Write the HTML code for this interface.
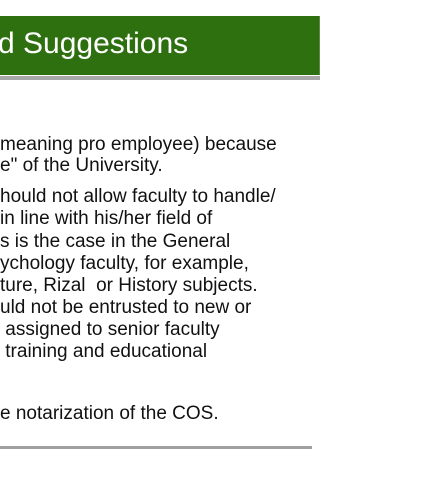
<!DOCTYPE html>
<html><head><style>
body{margin:0;width:426px;height:480px;background:#fff;overflow:hidden;position:relative;font-family:"Liberation Sans",sans-serif}
.bar{position:absolute;left:0;top:16px;width:319px;height:59px;background:#2e7010;border-right:1px solid #5a8a40}
.bar span{position:absolute;left:-2px;top:11px;color:#fff;font-size:30px;white-space:nowrap}
.sh{position:absolute;left:0;top:76px;width:320px;height:4px;background:#a8a8a8}
.t{position:absolute;left:0;white-space:nowrap;font-size:19px;color:#111;line-height:22px}
.bl{position:absolute;left:0;top:446px;width:312px;height:3px;background:#a0a0a0}
</style></head><body>
<div class="bar"><span>d Suggestions</span></div>
<div class="sh"></div>
<div class="t" style="top:134px">meaning pro employee) because</div>
<div class="t" style="top:155px">e" of the University.</div>
<div class="t" style="top:186px">hould not allow faculty to handle/</div>
<div class="t" style="top:208px">in line with his/her field of</div>
<div class="t" style="top:231px">s is the case in the General</div>
<div class="t" style="top:253px">ychology faculty, for example,</div>
<div class="t" style="top:275px">ture, Rizal&nbsp; or History subjects.</div>
<div class="t" style="top:297px">uld not be entrusted to new or</div>
<div class="t" style="top:319px">&nbsp;assigned to senior faculty</div>
<div class="t" style="top:341px">&nbsp;training and educational</div>
<div class="t" style="top:403px">e notarization of the COS.</div>
<div class="bl"></div>
</body></html>
